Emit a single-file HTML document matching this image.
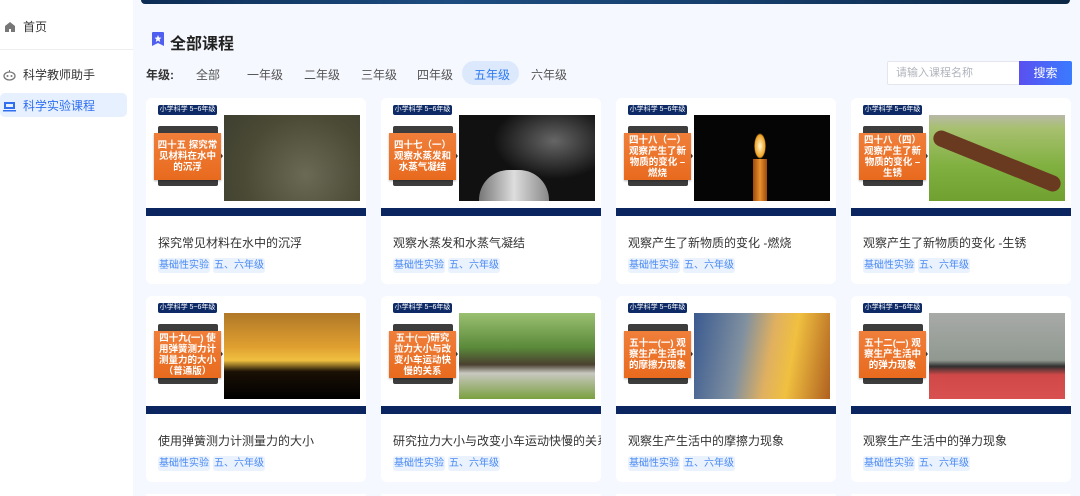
<!DOCTYPE html>
<html><head><meta charset="utf-8"><style>
*{margin:0;padding:0;box-sizing:border-box}
html{width:1080px;height:496px;overflow:hidden}
body{width:1080px;height:496px;overflow:hidden;background:#f5f8fe;font-family:"Liberation Sans","Noto Sans CJK SC",sans-serif;position:relative;color:#333}
.side{position:absolute;left:0;top:0;width:133px;height:496px;background:#fff}
.abs{position:absolute}
.nav{position:absolute;left:0;font-size:12px;color:#333;display:flex;align-items:center}
.card{position:absolute;width:220px;height:186px;background:#fff;border-radius:6px;overflow:hidden}
.badge{position:absolute;left:12px;top:7px;width:59px;height:10px;background:#0d2a66;color:#fff;font-size:7px;line-height:10px;text-align:center;border-radius:2px;white-space:nowrap}
.gray{position:absolute;left:12px;top:28px;width:60px;height:60px;background:#3d3d3d;border-radius:2px}
.gray:after{content:"";position:absolute;right:-5px;top:24px;border-left:5px solid #3d3d3d;border-top:6px solid transparent;border-bottom:6px solid transparent}
.org{position:absolute;left:8px;top:35px;width:67px;height:47px;background:linear-gradient(#f07f3a,#e86a1e);color:#fff;font-size:9.5px;font-weight:bold;line-height:11px;text-align:center;display:flex;align-items:center;justify-content:center;padding:0 2px;box-shadow:0 1px 2px rgba(0,0,0,.3)}
.img{position:absolute;left:78px;top:17px;width:136px;height:86px;overflow:hidden}
.bar{position:absolute;left:0;top:110px;width:220px;height:8px;background:#0b2561}
.title{position:absolute;left:12px;top:136px;font-size:12px;color:#333;white-space:nowrap}
.tag{position:absolute;top:160px;height:15px;font-size:10px;line-height:15px;color:#4a8af4;background:#eaf2fe;border-radius:3px;text-align:center;width:52px}
</style></head><body>
<div class="side">
  <div class="nav" style="top:18px;left:4px"><svg width="12" height="12" viewBox="0 0 12 12"><path d="M1 5 6 1 11 5V11H1Z" fill="#777"/><rect x="5" y="8" width="2" height="3" fill="#fff"/></svg><span style="margin-left:7px">首页</span></div>
  <div class="abs" style="left:0;top:49px;width:133px;height:1px;background:#eee"></div>
  <div class="nav" style="top:66px;left:3px"><svg width="13" height="12" viewBox="0 0 13 12"><ellipse cx="6.5" cy="7" rx="5.5" ry="4" fill="none" stroke="#777" stroke-width="1.3"/><circle cx="4.5" cy="7" r="1" fill="#777"/><circle cx="8.5" cy="7" r="1" fill="#777"/><path d="M6.5 3V1" stroke="#777"/></svg><span style="margin-left:7px">科学教师助手</span></div>
  <div class="abs" style="left:0;top:93px;width:127px;height:24px;background:#e7f0fe;border-radius:5px"></div>
  <div class="nav" style="top:97px;left:3px;color:#2f6ff0"><svg width="13" height="12" viewBox="0 0 13 12"><rect x="1" y="2" width="11" height="7" fill="#2f6ff0"/><rect x="3" y="4" width="7" height="3" fill="#e7f0fe"/><rect x="0" y="10" width="13" height="1.5" fill="#2f6ff0"/></svg><span style="margin-left:7px">科学实验课程</span></div>
</div>
<div class="abs" style="left:141px;top:0;width:929px;height:4px;background:linear-gradient(90deg,#0c2d55,#1d4d80,#153d6a,#0b2845);border-radius:0 0 6px 6px"></div>
<svg class="abs" style="left:151px;top:31px" width="14" height="16" viewBox="0 0 14 16"><path d="M2 1H12Q13 1 13 2V15L7 12 1 15V2Q1 1 2 1Z" fill="#4f5ff0"/><path d="M7 4 8 6.5 10.5 6.7 8.6 8.3 9.2 11 7 9.5 4.8 11 5.4 8.3 3.5 6.7 6 6.5Z" fill="#fff"/></svg>
<div class="abs" style="left:170px;top:30px;font-size:16px;font-weight:bold;color:#222">全部课程</div>
<div class="abs" style="left:146px;top:66px;font-size:12px;font-weight:bold;color:#333">年级:</div>
<div class="abs" style="left:196px;top:66px;font-size:12px;color:#555">全部</div>
<div class="abs" style="left:247px;top:66px;font-size:12px;color:#555">一年级</div>
<div class="abs" style="left:304px;top:66px;font-size:12px;color:#555">二年级</div>
<div class="abs" style="left:361px;top:66px;font-size:12px;color:#555">三年级</div>
<div class="abs" style="left:417px;top:66px;font-size:12px;color:#555">四年级</div>
<div class="abs" style="left:462px;top:61px;width:57px;height:24px;background:#dce9fd;border-radius:12px"></div>
<div class="abs" style="left:474px;top:66px;font-size:12px;color:#2f7bf0">五年级</div>
<div class="abs" style="left:531px;top:66px;font-size:12px;color:#555">六年级</div>
<div class="abs" style="left:887px;top:61px;width:133px;height:24px;background:#fff;border:1px solid #e3e6ee;border-radius:2px 0 0 2px;font-size:11px;color:#b0b4bc;line-height:22px;padding-left:8px">请输入课程名称</div>
<div class="abs" style="left:1019px;top:61px;width:53px;height:24px;background:linear-gradient(90deg,#5a50f0,#3a7bff);border-radius:0 2px 2px 0;font-size:12px;color:#fff;line-height:24px;text-align:center">搜索</div>

<div class="card" style="left:146px;top:98px"><div class="badge">小学科学 5~6年级</div><div class="gray"></div><div class="org">四十五 探究常见材料在水中的沉浮</div><div class="img" style="background:radial-gradient(circle at 60% 70%,#6a6a55,#4a4a35 60%,#3e3f30)"></div><div class="bar"></div><div class="title">探究常见材料在水中的沉浮</div><div class="tag" style="left:12px">基础性实验</div><div class="tag" style="left:67px">五、六年级</div></div>
<div class="card" style="left:381px;top:98px"><div class="badge">小学科学 5~6年级</div><div class="gray"></div><div class="org">四十七（一）观察水蒸发和水蒸气凝结</div><div class="img" style="background:radial-gradient(ellipse at 70% 30%,#666,#111 45%),#111"><div class="abs" style="left:20px;top:55px;width:70px;height:31px;background:linear-gradient(90deg,#777,#ddd,#888);border-radius:30px 30px 0 0"></div></div><div class="bar"></div><div class="title">观察水蒸发和水蒸气凝结</div><div class="tag" style="left:12px">基础性实验</div><div class="tag" style="left:67px">五、六年级</div></div>
<div class="card" style="left:616px;top:98px"><div class="badge">小学科学 5~6年级</div><div class="gray"></div><div class="org">四十八（一）观察产生了新物质的变化 – 燃烧</div><div class="img" style="background:#050505"><div class="abs" style="left:60px;top:18px;width:12px;height:26px;background:radial-gradient(#fff8d0,#f0a020 60%,transparent 70%);border-radius:50%"></div><div class="abs" style="left:59px;top:44px;width:14px;height:42px;background:linear-gradient(90deg,#a04a08,#e89030,#a04a08)"></div></div><div class="bar"></div><div class="title">观察产生了新物质的变化 -燃烧</div><div class="tag" style="left:12px">基础性实验</div><div class="tag" style="left:67px">五、六年级</div></div>
<div class="card" style="left:851px;top:98px"><div class="badge">小学科学 5~6年级</div><div class="gray"></div><div class="org">四十八（四）观察产生了新物质的变化 – 生锈</div><div class="img" style="background:linear-gradient(#b8b8a8 0,#a8c070 15%,#80b040 60%,#70a030)"><div class="abs" style="left:0;width:136px;height:16px;background:#6a3a20;transform:rotate(22deg);top:38px;border-radius:8px"></div></div><div class="bar"></div><div class="title">观察产生了新物质的变化 -生锈</div><div class="tag" style="left:12px">基础性实验</div><div class="tag" style="left:67px">五、六年级</div></div>

<div class="card" style="left:146px;top:296px"><div class="badge">小学科学 5~6年级</div><div class="gray"></div><div class="org">四十九(一) 使用弹簧测力计测量力的大小（普通版）</div><div class="img" style="background:linear-gradient(#b07828,#e0a030 40%,#f0c040 55%,#1a1005 68%,#000)"></div><div class="bar"></div><div class="title">使用弹簧测力计测量力的大小</div><div class="tag" style="left:12px">基础性实验</div><div class="tag" style="left:67px">五、六年级</div></div>
<div class="card" style="left:381px;top:296px"><div class="badge">小学科学 5~6年级</div><div class="gray"></div><div class="org">五十(一)研究拉力大小与改变小车运动快慢的关系</div><div class="img" style="background:linear-gradient(#9ac070,#5a8a3a 40%,#4a4030 60%,#c8c8c0 70%,#7aa040)"></div><div class="bar"></div><div class="title">研究拉力大小与改变小车运动快慢的关系</div><div class="tag" style="left:12px">基础性实验</div><div class="tag" style="left:67px">五、六年级</div></div>
<div class="card" style="left:616px;top:296px"><div class="badge">小学科学 5~6年级</div><div class="gray"></div><div class="org">五十一(一) 观察生产生活中的摩擦力现象</div><div class="img" style="background:linear-gradient(100deg,#3a5a90,#8090a0 35%,#e0b060 55%,#f0c040 70%,#b06020)"></div><div class="bar"></div><div class="title">观察生产生活中的摩擦力现象</div><div class="tag" style="left:12px">基础性实验</div><div class="tag" style="left:67px">五、六年级</div></div>
<div class="card" style="left:851px;top:296px"><div class="badge">小学科学 5~6年级</div><div class="gray"></div><div class="org">五十二(一) 观察生产生活中的弹力现象</div><div class="img" style="background:linear-gradient(#a8aaa8,#909890 55%,#303030 62%,#d04848 72%,#d85050)"></div><div class="bar"></div><div class="title">观察生产生活中的弹力现象</div><div class="tag" style="left:12px">基础性实验</div><div class="tag" style="left:67px">五、六年级</div></div>

<div class="card" style="left:146px;top:494px;height:2px"></div><div class="card" style="left:381px;top:494px;height:2px"></div><div class="card" style="left:616px;top:494px;height:2px"></div><div class="card" style="left:851px;top:494px;height:2px"></div>
</body></html>
